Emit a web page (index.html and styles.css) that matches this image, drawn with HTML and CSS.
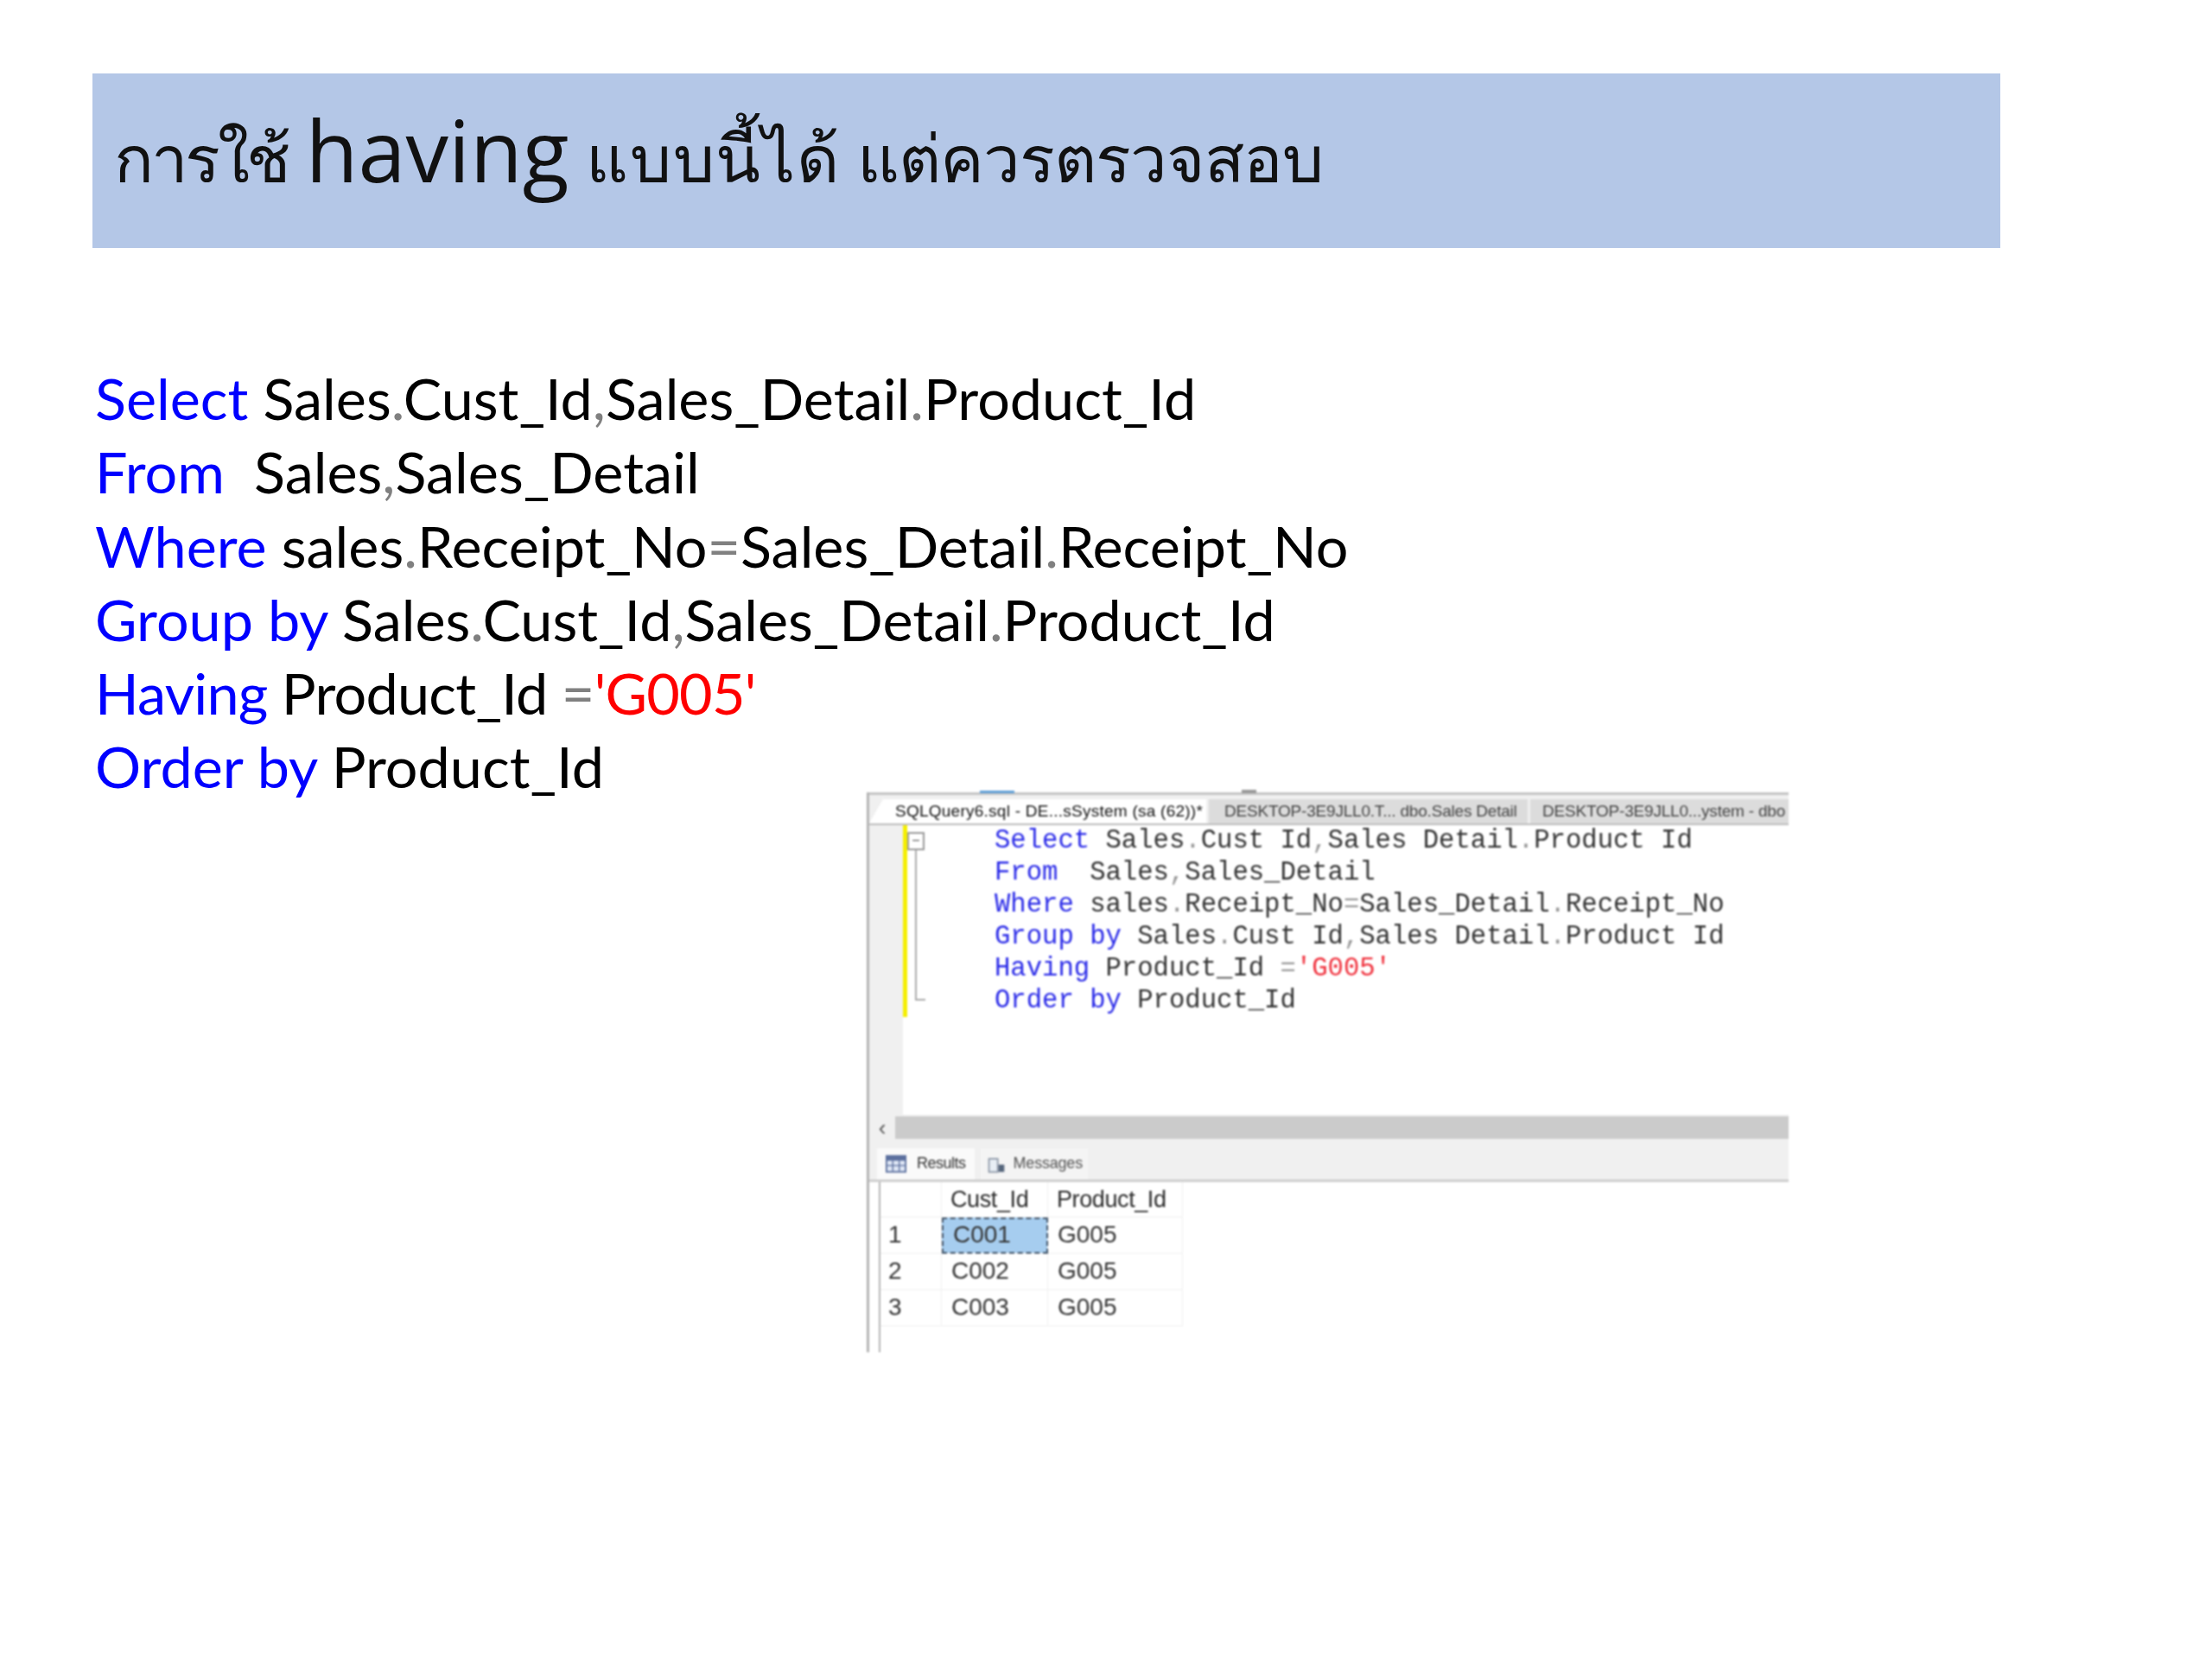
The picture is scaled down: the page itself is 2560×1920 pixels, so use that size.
FILE: index.html
```html
<!DOCTYPE html>
<html lang="th">
<head>
<meta charset="utf-8">
<title>การใช้ having</title>
<link rel="stylesheet" href="styles.css">
</head>
<body>
<main class="slide">
  <h1 class="title"><span class="thai w1">การใช้</span> <span class="latin">having</span> <span class="thai w2">แบบนี้ได้</span> <span class="thai w3">แต่ควรตรวจสอบ</span></h1>
  <div class="query">
    <div><b>Select</b> Sales<i>.</i>Cust_Id<i>,</i>Sales_Detail<i>.</i>Product_Id</div>
    <div><b>From</b>&nbsp; Sales<i>,</i>Sales_Detail</div>
    <div><b>Where</b> sales<i>.</i>Receipt_No<i>=</i>Sales_Detail<i>.</i>Receipt_No</div>
    <div><b>Group by</b> Sales<i>.</i>Cust_Id<i>,</i>Sales_Detail<i>.</i>Product_Id</div>
    <div class="tight"><b>Having</b> Product_Id <i>=</i><u>'G005'</u></div>
    <div><b>Order by</b> Product_Id</div>
  </div>
  <section class="ssms">
    <div class="topline"><span class="mark-blue"></span><span class="mark-gray"></span></div>
    <div class="tabs">
      <div class="tab active">SQLQuery6.sql - DE...sSystem (sa (62))*</div>
      <div class="tab t1">DESKTOP-3E9JLL0.T... dbo.Sales Detail</div>
      <div class="tab t2">DESKTOP-3E9JLL0...ystem - dbo</div>
    </div>
    <div class="editor">
      <div class="gutter"><span class="yellow"></span><span class="fold">−</span><span class="foldline"></span></div>
      <pre class="sql"><b>Select</b> Sales<i>.</i>Cust Id<i>,</i>Sales Detail<i>.</i>Product Id
<b>From</b>  Sales<i>,</i>Sales_Detail
<b>Where</b> sales<i>.</i>Receipt_No<i>=</i>Sales_Detail<i>.</i>Receipt_No
<b>Group by</b> Sales<i>.</i>Cust Id<i>,</i>Sales Detail<i>.</i>Product Id
<b>Having</b> Product_Id <i>=</i><u>'G005'</u>
<b>Order by</b> Product_Id</pre>
    </div>
    <div class="scroll"><span class="arrow">‹</span><span class="thumb"></span></div>
    <div class="rtabs">
      <div class="rtab on">
        <svg class="ico" viewBox="0 0 26 22"><rect width="26" height="22" fill="#5b6f9e"/><rect x="2" y="7" width="22" height="13" fill="#dfe7f5"/><path d="M9 7v13M17 7v13M2 13h22" stroke="#5b6f9e" stroke-width="1.5"/></svg>
        Results
      </div>
      <div class="rtab msg">
        <svg class="ico" viewBox="0 0 26 26"><path d="M3 6h12v18H3z" fill="#e8eef5" stroke="#8a95a5" stroke-width="2"/><path d="M16 14h8v10h-8z" fill="#56667c"/></svg>
        Messages
      </div>
    </div>
    <div class="grid">
      <div class="cell hd"></div><div class="cell hd">Cust_Id</div><div class="cell hd">Product_Id</div>
      <div class="cell num">1</div><div class="cell sel">C001</div><div class="cell">G005</div>
      <div class="cell num">2</div><div class="cell">C002</div><div class="cell">G005</div>
      <div class="cell num">3</div><div class="cell">C003</div><div class="cell">G005</div>
    </div>
  </section>
</main>
</body>
</html>
```
FILE: styles.css
```css
* { box-sizing: border-box; }
html, body { margin: 0; background: #fff; }
.slide { width: 2560px; height: 1920px; padding: 85px 0 0 107px; overflow: hidden; }
.title {
  width: 2208px; height: 202px; margin: 0; padding: 0 0 0 25px;
  background: #b4c7e7; color: #111; font-family: "Noto Sans", sans-serif; font-size: 76px; font-weight: 400;
  line-height: 176px; white-space: nowrap;
}
.title .thai { font-family: "Noto Sans", "DejaVu Sans", sans-serif; font-size: 76px; font-weight: 300; }
.title .w1 { letter-spacing: -3.4px; }
.title .w2 { letter-spacing: 1.7px; }
.title .w3 { letter-spacing: -1px; }
.title .latin { font-family: "Open Sans", sans-serif; font-size: 99px; }
.query {
  margin: 131px 0 0 3px;
  font-family: Lato, "Open Sans", sans-serif; font-size: 66.5px; line-height: 85.3px; color: #000;
}
.query .tight { letter-spacing: -.75px; }
.query b { font-weight: 400; color: #0000ff; }
.query i { font-style: normal; color: #808080; }
.query u { text-decoration: none; color: #ff0000; }
.ssms {
  width: 1067px; height: 648px; margin: -13px 0 0 896px;
  display: flex; flex-direction: column; position: relative;
  background: #fff; filter: blur(.8px); border-left: 3px solid #b5b5b5;
  font-family: "Liberation Sans", sans-serif; color: #333;
}
.topline { height: 8px; border-top: 3px solid #c4c4c4; position: relative; background: #f0f0f0; }
.mark-blue { position: absolute; left: 128px; top: -5px; width: 40px; height: 3px; background: #5f9fd8; }
.mark-gray { position: absolute; left: 431px; top: -6px; width: 17px; height: 4px; background: #9a9a9a; }
.tabs { height: 30px; display: flex; gap: 3px; background: #f0f0f0; font-size: 19px; white-space: nowrap; overflow: hidden; border-bottom: 2px solid #bdbdbd; }
.tab { line-height: 27px; overflow: hidden; padding-left: 10px; }
.tab.active { width: 390px; padding-left: 30px; background: #fff; color: #111; letter-spacing: .25px; clip-path: polygon(16px 0, 100% 0, 100% 100%, 0 100%); }
.tab.t1 { width: 369px; background: #dcdcdc; color: #444; padding-left: 18px; letter-spacing: -.2px; }
.tab.t2 { flex: 1; background: #dcdcdc; color: #444; padding-left: 14px; letter-spacing: -.2px; }
.editor { height: 335px; display: flex; }
.gutter { width: 145px; position: relative; flex: none; background: linear-gradient(90deg, #f0f0f0 39px, #fff 39px); }
.yellow { position: absolute; left: 39px; top: 0; width: 5px; height: 222px; background: #f5ef00; }
.fold { position: absolute; left: 44px; top: 8px; width: 20px; height: 21px; border: 2px solid #999; background: #fff; font-size: 16px; line-height: 16px; text-align: center; color: #555; }
.foldline { position: absolute; left: 53px; top: 29px; width: 12px; height: 174px; border-left: 2px solid #aaa; border-bottom: 2px solid #aaa; }
.sql {
  margin: 0; font-family: "Liberation Mono", monospace; font-size: 30.6px; line-height: 37.1px; color: #333;
}
.sql b { font-weight: 400; color: #2a2ae8; }
.sql i { font-style: normal; color: #999; }
.sql u { text-decoration: none; color: #f0303c; }
.scroll { height: 34px; display: flex; align-items: center; background: #f0f0f0; padding-bottom: 4px; }
.arrow { width: 30px; text-align: center; font-size: 26px; line-height: 26px; color: #555; }
.thumb { flex: 1; height: 26px; background: #cbcbcb; }
.rtabs { height: 44px; display: flex; align-items: flex-end; padding-left: 9px; gap: 7px; background: #f0f0f0; border-bottom: 3px solid #cfcfcf; font-size: 18px; }
.rtab { height: 36px; display: flex; align-items: center; gap: 10px; padding: 0 10px; background: #f4f4f4; color: #555; }
.rtab.on { background: #fafafa; color: #333; letter-spacing: -.5px; gap: 12px; }
.rtab.msg { gap: 8px; padding: 0 6px; letter-spacing: -.2px; }
.ico { width: 24px; height: 22px; }
.grid {
  margin-left: 11px; flex: 1; border-left: 2px solid #b5b5b5;
  display: grid; grid-template-columns: 71px 123px 156px; grid-auto-rows: 41.7px; align-content: start;
  font-size: 28px; color: #333;
}
.cell { padding-left: 11px; line-height: 40px; border-right: 1px solid #f0f0f0; border-bottom: 1px solid #f0f0f0; }
.cell.hd { color: #2b2b2b; font-size: 27px; letter-spacing: -.4px; padding-left: 10px; }
.cell.num { padding-left: 9px; }
.cell.sel { background: #a6cdef; outline: 2px dashed #44566a; outline-offset: -2px; padding-left: 13px; }
```
